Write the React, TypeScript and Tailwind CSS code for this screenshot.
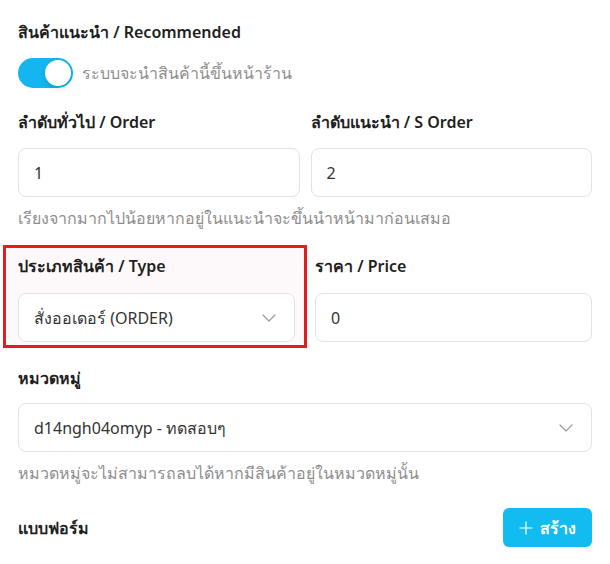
import { useState } from 'react';

function Chevron() {
  return (
    <svg width="14" height="8" viewBox="0 0 14 8" fill="none" className="mr-[3px] text-[#9a9a9a]">
      <path d="M1 1l6 6 6-6" stroke="currentColor" strokeWidth="1.2" strokeLinecap="round" strokeLinejoin="round" />
    </svg>
  );
}

export default function App() {
  const [recommended, setRecommended] = useState(true);

  const label = 'text-[16px] font-semibold text-[#1f1f1f] leading-6';
  const field =
    'h-[49px] w-full rounded-lg border border-[#e3e3e3] bg-white px-[15px] text-[16px] text-[#333] flex items-center';
  const help = 'text-[16px] text-[#8e8e8e] leading-6';

  return (
    <div
      className="min-h-screen bg-white"
      style={{ fontFamily: '"Noto Sans", "Inter", sans-serif' }}>
      <div className="px-[18px] pt-5">
        <div className={label}>สินค้าแนะนำ / Recommended</div>

        <div className="mt-[14px] flex items-center gap-[9px]">
          <button
            onClick={() => setRecommended(!recommended)}
            className={`relative h-[30px] w-[55px] rounded-full ${
              recommended ? 'bg-[#13b6ee]' : 'bg-gray-300'
            }`}>
            <span
              className={`absolute top-[2px] h-[26px] w-[26px] rounded-full bg-white shadow-[0_3px_6px_rgba(0,0,0,0.12)] ${
                recommended ? 'left-[27px]' : 'left-[2px]'
              }`}
            />
          </button>
          <span className="text-[16px] text-[#8e8e8e]">ระบบจะนำสินค้านี้ขึ้นหน้าร้าน</span>
        </div>

        <div className="mt-[22px] grid grid-cols-2 gap-[11px]">
          <div>
            <div className={label}>ลำดับทั่วไป / Order</div>
            <div className={`mt-[14px] ${field}`}>1</div>
          </div>
          <div>
            <div className={label}>ลำดับแนะนำ / S Order</div>
            <div className={`mt-[14px] ${field}`}>2</div>
          </div>
        </div>
        <div className={`mt-[9px] ${help}`}>
          เรียงจากมากไปน้อยหากอยู่ในแนะนำจะขึ้นนำหน้ามาก่อนเสมอ
        </div>
      </div>

      <div className="mt-[15px] flex pr-[18px]">
        <div className="ml-[3px] w-[304px] border-[3px] border-[#e21d1d] bg-[#fdf9fa] pb-[3px] pl-[12px] pr-[9px] pt-[6px]">
          <div className={label}>ประเภทสินค้า / Type</div>
          <div className={`mt-[15px] justify-between ${field} bg-[#fdfbfb]`}>
            <span>สั่งออเดอร์ (ORDER)</span>
            <Chevron />
          </div>
        </div>
        <div className="ml-[8px] flex-1 pt-[9px]">
          <div className={label}>ราคา / Price</div>
          <div className={`mt-[15px] ${field}`}>0</div>
        </div>
      </div>

      <div className="px-[18px] pt-[18px]">
        <div className={label}>หมวดหมู่</div>
        <div className={`mt-[13px] justify-between ${field}`}>
          <span>d14ngh04omyp - ทดสอบๆ</span>
          <Chevron />
        </div>
        <div className={`mt-[9px] ${help}`}>
          หมวดหมู่จะไม่สามารถลบได้หากมีสินค้าอยู่ในหมวดหมู่นั้น
        </div>

        <div className="mt-[23px] flex items-center justify-between">
          <div className={label}>แบบฟอร์ม</div>
          <button className="flex h-[39px] w-[89px] items-center justify-center gap-[7px] rounded-md bg-[#12bcf1] text-[16px] font-bold text-white">
            <svg width="14" height="14" viewBox="0 0 14 14" fill="none">
              <path d="M7 0.5v13M0.5 7h13" stroke="currentColor" strokeWidth="1.2" />
            </svg>
            สร้าง
          </button>
        </div>
      </div>
    </div>
  );
}
